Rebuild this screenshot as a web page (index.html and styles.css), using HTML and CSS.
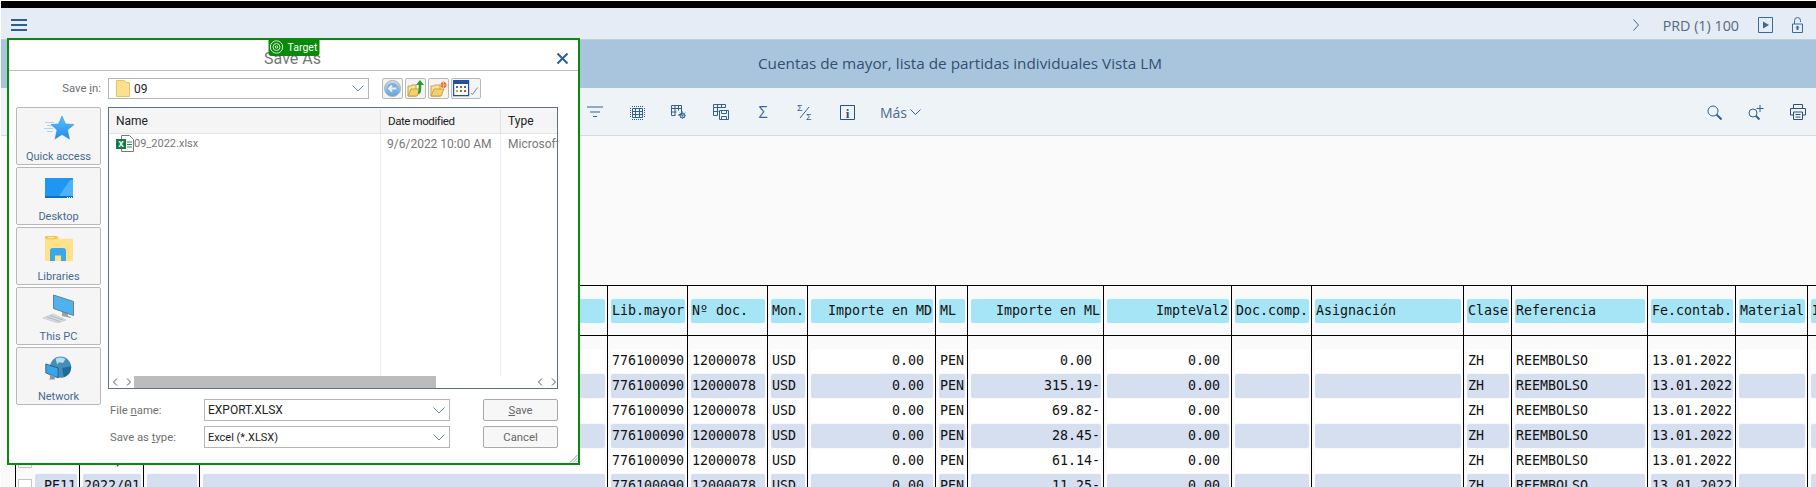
FILE: index.html
```html
<!DOCTYPE html>
<html lang="es">
<head>
<meta charset="utf-8">
<title>Cuentas de mayor, lista de partidas individuales Vista LM</title>
<link rel="stylesheet" href="styles.css">
</head>
<body>
<div class="topline"></div>
<header class="shell">
  <svg class="ico-menu" width="16" height="12" viewBox="0 0 16 12"><path d="M0 1h16M0 6h16M0 11h16"/></svg>
  <div class="shell-right">
    <svg class="ico-line" width="6" height="12" viewBox="0 0 6 12"><path d="M.5.5 5.500 6 .5 11.500"/></svg>
    <span class="sysname">PRD (1) 100</span>
    <svg class="ico-line" width="15" height="16" viewBox="0 0 15 16"><path d="M.5.5h14v15H.5z"/><path class="fill" d="M5 4.500 11 8 5 11.500z"/></svg>
    <svg class="ico-line" width="11" height="16" viewBox="0 0 11 16"><path d="M2.500 7V3.500a3 3 0 0 1 6 0V5"/><path d="M.5 7h10v8.500H.5z"/><path class="fill" d="M4.500 13v-2.500H3.500L5.500 8.500l2 2h-1V13z"/></svg>
  </div>
</header>
<div class="titlebar">Cuentas de mayor, lista de partidas individuales Vista LM</div>
<nav class="toolbar">
  <button class="tool"><svg class="ico-thin" width="16" height="12" viewBox="0 0 16 12"><path d="M0 1h16M3 6h10M6 10.500h4"/></svg></button>
  <button class="tool"><svg class="ico-thin" width="15" height="15" viewBox="0 0 15 15"><path d="M2.500 3.500h10v9h-10zM2.500 6.500h10M2.500 9.500h10M5.500 3.500v9M9.500 3.500v9"/><path stroke-dasharray="1 1" d="M2 1.500h11M2 14.500h11M.5 3v10M14.500 3v10"/></svg></button>
  <button class="tool"><svg class="ico-thin" width="16" height="15" viewBox="0 0 16 15"><path d="M.5.5h10v9h-3M.5.5v10h4M.5 3.500h10M.5 7h5M4 .5v9.500M7.500.5v5"/><circle cx="11.500" cy="10.500" r="2.500"/><path stroke-dasharray="1 1" d="M7.500 10.500h8M11.500 6.500v8M8.700 7.700l5.600 5.600M14.300 7.700l-5.600 5.600"/></svg></button>
  <button class="tool"><svg class="ico-thin" width="16" height="16" viewBox="0 0 16 16"><path d="M.5.5h12v3H.5zM.5 3.500v8h4M.5 7.500h5M4.500.5v11M8.500.5v3"/><path d="M6.500 6.500h9v9h-9zM8.500 6.500v3h5v-3M8.500 15.500v-3h5v3"/></svg></button>
  <button class="tool glyph">Σ</button>
  <button class="tool"><svg class="ico-ratio" width="16" height="17" viewBox="0 0 16 17"><text x="0" y="7" class="ratio-t">Σ</text><text x="9" y="16" class="ratio-t">Σ</text><path d="M3 14 12 3"/></svg></button>
  <button class="tool"><svg class="ico-thin" width="15" height="15" viewBox="0 0 15 15"><path class="dark" d="M.5.5h14v14H.5z"/><text x="7.500" y="12.500" class="info-t">i</text></svg></button>
  <button class="tool more">Más <svg class="ico-thin" width="11" height="6" viewBox="0 0 11 6"><path d="M.5.5 5.500 5.500 10.500.5"/></svg></button>
  <span class="spring"></span>
  <button class="tool"><svg class="ico-thin" width="15" height="15" viewBox="0 0 15 15"><circle cx="6" cy="6" r="5"/><path class="bold" d="m9.500 9.500 5 5"/></svg></button>
  <button class="tool"><svg class="ico-thin" width="16" height="15" viewBox="0 0 16 15"><circle cx="5" cy="8" r="4"/><path class="bold" d="m8 11 3.500 3.500"/><path d="M12 0v7M8.500 3.500h7"/></svg></button>
  <button class="tool tool-end"><svg class="ico-thin" width="16" height="16" viewBox="0 0 16 16"><path class="dark" d="M3.500 4V.5h9V4M3.500 11H.5V4.500h15V11h-3M3.500 8h9v7.500h-9zM5.500 10.500h5M5.500 13h5"/></svg></button>
</nav>

<main class="content">
  <div class="grid">
    <div class="row head">
      <div class="c"></div><div class="c"></div><div class="c"></div>
      <div class="c"><span class="v"></span></div>
      <div class="c"><span class="v">Lib.mayor</span></div>
      <div class="c"><span class="v">Nº doc.</span></div>
      <div class="c"><span class="v">Mon.</span></div>
      <div class="c"><span class="v r">Importe en MD</span></div>
      <div class="c"><span class="v">ML</span></div>
      <div class="c"><span class="v r">Importe en ML</span></div>
      <div class="c"><span class="v r">ImpteVal2</span></div>
      <div class="c"><span class="v">Doc.comp.</span></div>
      <div class="c"><span class="v">Asignación</span></div>
      <div class="c"><span class="v">Clase</span></div>
      <div class="c"><span class="v">Referencia</span></div>
      <div class="c"><span class="v">Fe.contab.</span></div>
      <div class="c"><span class="v">Material</span></div>
      <div class="c"><span class="v">I</span></div>
    </div>
    <div class="row gap">
      <div class="c"></div><div class="c"></div><div class="c"></div><div class="c"></div><div class="c"></div><div class="c"></div><div class="c"></div><div class="c"></div><div class="c"></div><div class="c"></div><div class="c"></div><div class="c"></div><div class="c"></div><div class="c"></div><div class="c"></div><div class="c"></div><div class="c"></div><div class="c"></div>
    </div>
    <div class="row">
      <div class="c first"><i class="check"></i><span class="v r"></span></div><div class="c"><span class="v"></span></div><div class="c"><span class="v"></span></div><div class="c"><span class="v"></span></div>
      <div class="c"><span class="v">776100090</span></div><div class="c"><span class="v">12000078</span></div><div class="c"><span class="v">USD</span></div><div class="c"><span class="v r">0.00 </span></div><div class="c"><span class="v">PEN</span></div><div class="c"><span class="v r">0.00 </span></div><div class="c"><span class="v r">0.00 </span></div><div class="c"><span class="v"></span></div><div class="c"><span class="v"></span></div><div class="c"><span class="v">ZH</span></div><div class="c"><span class="v">REEMBOLSO</span></div><div class="c"><span class="v">13.01.2022</span></div><div class="c"><span class="v"></span></div><div class="c"><span class="v"></span></div>
    </div>
    <div class="row alt">
      <div class="c first"><i class="check"></i><span class="v r"></span></div><div class="c"><span class="v"></span></div><div class="c"><span class="v"></span></div><div class="c"><span class="v"></span></div>
      <div class="c"><span class="v">776100090</span></div><div class="c"><span class="v">12000078</span></div><div class="c"><span class="v">USD</span></div><div class="c"><span class="v r">0.00 </span></div><div class="c"><span class="v">PEN</span></div><div class="c"><span class="v r">315.19-</span></div><div class="c"><span class="v r">0.00 </span></div><div class="c"><span class="v"></span></div><div class="c"><span class="v"></span></div><div class="c"><span class="v">ZH</span></div><div class="c"><span class="v">REEMBOLSO</span></div><div class="c"><span class="v">13.01.2022</span></div><div class="c"><span class="v"></span></div><div class="c"><span class="v"></span></div>
    </div>
    <div class="row">
      <div class="c first"><i class="check"></i><span class="v r"></span></div><div class="c"><span class="v"></span></div><div class="c"><span class="v"></span></div><div class="c"><span class="v"></span></div>
      <div class="c"><span class="v">776100090</span></div><div class="c"><span class="v">12000078</span></div><div class="c"><span class="v">USD</span></div><div class="c"><span class="v r">0.00 </span></div><div class="c"><span class="v">PEN</span></div><div class="c"><span class="v r">69.82-</span></div><div class="c"><span class="v r">0.00 </span></div><div class="c"><span class="v"></span></div><div class="c"><span class="v"></span></div><div class="c"><span class="v">ZH</span></div><div class="c"><span class="v">REEMBOLSO</span></div><div class="c"><span class="v">13.01.2022</span></div><div class="c"><span class="v"></span></div><div class="c"><span class="v"></span></div>
    </div>
    <div class="row alt">
      <div class="c first"><i class="check"></i><span class="v r"></span></div><div class="c"><span class="v"></span></div><div class="c"><span class="v"></span></div><div class="c"><span class="v"></span></div>
      <div class="c"><span class="v">776100090</span></div><div class="c"><span class="v">12000078</span></div><div class="c"><span class="v">USD</span></div><div class="c"><span class="v r">0.00 </span></div><div class="c"><span class="v">PEN</span></div><div class="c"><span class="v r">28.45-</span></div><div class="c"><span class="v r">0.00 </span></div><div class="c"><span class="v"></span></div><div class="c"><span class="v"></span></div><div class="c"><span class="v">ZH</span></div><div class="c"><span class="v">REEMBOLSO</span></div><div class="c"><span class="v">13.01.2022</span></div><div class="c"><span class="v"></span></div><div class="c"><span class="v"></span></div>
    </div>
    <div class="row">
      <div class="c first"><i class="check"></i><span class="v r"></span></div><div class="c"><span class="v">2022/01</span></div><div class="c"><span class="v"></span></div><div class="c"><span class="v"></span></div>
      <div class="c"><span class="v">776100090</span></div><div class="c"><span class="v">12000078</span></div><div class="c"><span class="v">USD</span></div><div class="c"><span class="v r">0.00 </span></div><div class="c"><span class="v">PEN</span></div><div class="c"><span class="v r">61.14-</span></div><div class="c"><span class="v r">0.00 </span></div><div class="c"><span class="v"></span></div><div class="c"><span class="v"></span></div><div class="c"><span class="v">ZH</span></div><div class="c"><span class="v">REEMBOLSO</span></div><div class="c"><span class="v">13.01.2022</span></div><div class="c"><span class="v"></span></div><div class="c"><span class="v"></span></div>
    </div>
    <div class="row alt">
      <div class="c first"><i class="check"></i><span class="v r">PE11</span></div><div class="c"><span class="v">2022/01</span></div><div class="c"><span class="v"></span></div><div class="c"><span class="v"></span></div>
      <div class="c"><span class="v">776100090</span></div><div class="c"><span class="v">12000078</span></div><div class="c"><span class="v">USD</span></div><div class="c"><span class="v r">0.00 </span></div><div class="c"><span class="v">PEN</span></div><div class="c"><span class="v r">11.25-</span></div><div class="c"><span class="v r">0.00 </span></div><div class="c"><span class="v"></span></div><div class="c"><span class="v"></span></div><div class="c"><span class="v">ZH</span></div><div class="c"><span class="v">REEMBOLSO</span></div><div class="c"><span class="v">13.01.2022</span></div><div class="c"><span class="v"></span></div><div class="c"><span class="v"></span></div>
    </div>
  </div>
</main>

<section class="dialog">
  <div class="badge"><svg width="14" height="14" viewBox="0 0 14 14"><circle cx="7" cy="7" r="6.200"/><circle cx="7" cy="7" r="3.500"/><circle cx="7" cy="7" r="1.200"/></svg>Target</div>
  <div class="dlg-title">
    <span></span>
    <span class="dlg-name">Save As</span>
    <svg class="dlg-close" width="11" height="11" viewBox="0 0 11 11"><path d="m.5.5 10 10M10.500.5l-10 10"/></svg>
  </div>
  <div class="dlg-body">
    <div class="savein">
      <label class="lbl savein-lbl">Save <u>i</u>n:</label>
      <div class="combo savein-combo">
        <svg width="14" height="17" viewBox="0 0 14 17"><path fill="#fde08e" stroke="#e3c268" d="M.5.5h8l1.500 2h3.500v14H.5z"/></svg>
        <span class="combo-text">09</span>
        <svg class="chev" width="12" height="7" viewBox="0 0 12 7"><path d="M.5.5 6 6l5.500-5.500"/></svg>
      </div>
      <div class="nav-btns">
        <button class="nav"><svg width="17" height="17" viewBox="0 0 17 17"><defs><linearGradient id="backg" x1="0" y1="0" x2="0" y2="1"><stop offset="0" stop-color="#d7dde2"/><stop offset="1" stop-color="#5f9fd3"/></linearGradient></defs><circle cx="8.500" cy="8.500" r="8" fill="url(#backg)" stroke="#a9b4bd"/><circle cx="8.500" cy="8.500" r="5.500" fill="#79aede"/><path fill="none" stroke="#e8f0f7" stroke-width="2" d="M12.500 8.500h-7M8 5.500l-3 3 3 3"/></svg></button>
        <button class="nav"><svg width="17" height="17" viewBox="0 0 17 17"><path fill="#fbe39b" stroke="#c9a23f" d="M1 16V6h3l1-1h4v11z"/><path fill="#f6cf6d" stroke="#c9a23f" d="M1 16l3-7h9l-3 7z"/><path fill="none" stroke="#2c9a2c" stroke-width="2.500" d="M11 13c2 0 2-2 2-9"/><path fill="#2c9a2c" d="M9 5l4-5 4 5z"/></svg></button>
        <button class="nav"><svg width="18" height="16" viewBox="0 0 18 16"><path fill="#fbe39b" stroke="#c9a23f" d="M1 15V5h3l1-1h5v11z"/><path fill="#f6cf6d" stroke="#c9a23f" d="M1 15l3-7h10l-3 7z"/><circle cx="13.500" cy="4" r="3" fill="#e66b1e"/><path stroke="#f7b27c" d="M13.500 0v8M9.500 4h8"/></svg></button>
        <button class="nav nav-wide"><svg width="26" height="17" viewBox="0 0 26 17"><path fill="#fff" stroke="#23509a" stroke-width="1.200" d="M.6.6h15v15H.6z"/><path fill="#23509a" d="M1 1h14v3H1z"/><path fill="#2b6cc4" d="M3 6h2v2H3z"/><path fill="#d04a3b" d="M7 6h2v2H7z"/><path fill="#2b6cc4" d="M11 6h2v2h-2z"/><path fill="#d9a21b" d="M3 10h2v2H3z"/><path fill="#3a9a3a" d="M7 10h2v2H7z"/><path fill="#d04a3b" d="M11 10h2v2h-2z"/><path fill="none" stroke="#6c8fb5" d="m18 13 1.500 1.500 5-7"/></svg></button>
      </div>
    </div>
    <div class="dlg-main">
      <aside class="places">
        <button class="place"><span class="place-ico"><svg width="30" height="24" viewBox="0 0 30 24"><defs><linearGradient id="starg" x1="0" y1="0" x2="0" y2="1"><stop offset="0" stop-color="#5cc0fb"/><stop offset="1" stop-color="#1c8fec"/></linearGradient></defs><path fill="#a8d6f6" d="M1 6h9v1H1zM3 9h7v1H3zM0 12h9v1H0zM3 15h6v1H3z"/><path fill="url(#starg)" stroke="#1a86dc" stroke-width=".5" d="m18 0 3.500 8 8.500.5-6.500 5.500 2 9-7.500-4.500-7 4.500 2-9L7 8.500l7.500-.5z"/></svg></span><span>Quick access</span></button>
        <button class="place"><span class="place-ico"><svg width="28" height="20" viewBox="0 0 28 20"><path fill="#1e96f2" d="M0 0h28v20H0z"/><path fill="#4db2f8" d="M14 18 25 2h3v16z"/><path fill="#0c6fc4" d="M0 18h28v2H0z"/><path fill="#fff" d="M22 19h1v1h-1zM24 19h1v1h-1zM26 19h1v1h-1z"/></svg></span><span>Desktop</span></button>
        <button class="place"><span class="place-ico"><svg width="28" height="25" viewBox="0 0 28 27" preserveAspectRatio="none"><path fill="#ffe28a" d="M0 3h28v24H0z"/><path fill="#f4c94a" d="M0 1a1 1 0 0 1 1-1h11l2 3H0z"/><path fill="#fff" stroke="#f0b93a" d="M2 1h8v2H2z"/><path fill="#3ba6e8" d="M5 27V16a3 3 0 0 1 3-3h10a3 3 0 0 1 3 3v11h-5v-6h-6v6z"/></svg></span><span>Libraries</span></button>
        <button class="place"><span class="place-ico"><svg width="32" height="29" viewBox="0 0 32 29"><path fill="#9aa4ad" d="M19 17h6v5l3 1v1l-9-2z"/><path fill="#4db3f0" stroke="#6b7f90" d="M10.500 1l20 6.500v14l-20-7z"/><path fill="#d9dde1" stroke="#b3b9bf" stroke-width=".5" d="M10 20l13 6-8 3-15-5z"/><path stroke="#9aa4ad" stroke-width=".7" d="M4 23l13 4.500M7 21.500l13 4.500"/></svg></span><span>This PC</span></button>
        <button class="place"><span class="place-ico"><svg width="27" height="24" viewBox="0 0 33 28"><circle cx="19" cy="13" r="13" fill="#3f8fb8"/><path fill="#b7dcec" d="M13 3c4-3 9-2 12 0l-3 5-5-1-2 3z"/><path fill="#1f6a97" d="M21 14l11-2c0 7-4 12-9 13z"/><path fill="#35a7ee" stroke="#3a4d5e" d="M1 9l15 5v12L1 20z"/><path fill="#8d979f" d="M6 22l6 2v4H4l2-1z"/></svg></span><span>Network</span></button>
      </aside>
      <div class="files">
        <div class="list">
          <div class="list-head">
            <span class="col col-name">Name</span>
            <span class="col col-date">Date modified</span>
            <span class="col col-type">Type</span>
          </div>
          <div class="list-body">
            <div class="col-lines"><i class="col-name"></i><i class="col-date"></i></div>
            <div class="file">
              <span class="col col-name file-name"><svg width="18" height="17" viewBox="0 0 18 17"><path fill="#fff" stroke="#777" d="M5.500.5h8l4 4v12h-12z"/><path stroke="#2d8a57" d="M11 7h5M11 9.500h5M11 12h5"/><path fill="#107c41" d="M0 4h10v10H0z"/><text x="5" y="12" class="xl-t">x</text></svg>09_2022.xlsx</span>
              <span class="col col-date">9/6/2022 10:00 AM</span>
              <span class="col col-type">Microsoft Excel Worksheet</span>
            </div>
          </div>
          <div class="hscroll">
            <svg class="arrows" width="18" height="8" viewBox="0 0 18 8"><path d="M4 .5.500 4 4 7.500M14 .5 17.500 4 14 7.500"/></svg>
            <div class="thumb"></div>
            <svg class="arrows" width="18" height="8" viewBox="0 0 18 8"><path d="M4 .5.500 4 4 7.500M14 .5 17.500 4 14 7.500"/></svg>
          </div>
        </div>
        <div class="form">
          <label class="lbl">File <u>n</u>ame:</label>
          <div class="combo"><span class="combo-text">EXPORT.XLSX</span><svg class="chev" width="12" height="7" viewBox="0 0 12 7"><path d="M.5.5 6 6l5.500-5.500"/></svg></div>
          <button class="act"><u>S</u>ave</button>
          <label class="lbl">Save as <u>t</u>ype:</label>
          <div class="combo combo-type"><span class="combo-text">Excel (*.XLSX)</span><svg class="chev" width="12" height="7" viewBox="0 0 12 7"><path d="M.5.5 6 6l5.500-5.500"/></svg></div>
          <button class="act">Cancel</button>
        </div>
      </div>
    </div>
  </div>
  <svg class="grip" width="9" height="9" viewBox="0 0 9 9"><path d="M8.500 1 1 8.500M8.500 4 4 8.500M8.500 7 7 8.500"/></svg>
</section>
</body>
</html>
```
FILE: styles.css
```css
* { box-sizing: border-box; }
html, body { margin: 0; height: 100%; }
body {
  width: 1816px;
  height: 487px;
  overflow: hidden;
  padding: 1px 0 0 1px;
  background: #fff;
  display: flex;
  flex-direction: column;
  position: relative;
  font-family: "Roboto", "Liberation Sans", sans-serif;
}
button { font: inherit; margin: 0; padding: 0; border: 0; background: none; }

.topline { height: 7px; background: #000; flex: none; }

.shell {
  flex: none;
  height: 32px;
  background: #e5ecf5;
  border-bottom: 1px solid #c3cdd8;
  display: flex;
  align-items: center;
  padding: 3px 13px 0 10px;
}
.ico-menu path { stroke: #2f5f8e; stroke-width: 2; fill: none; }
.shell-right { margin-left: auto; display: flex; align-items: center; gap: 19px; }
.shell-right > svg:first-child { margin-right: 5px; }
.ico-line path { fill: none; stroke: #3a6a98; stroke-width: 1; }
.ico-line path.fill { fill: #3a6a98; stroke: none; }
.sysname { font-size: 14.300px; color: #56697e; font-family: "Open Sans", sans-serif; }

.titlebar {
  flex: none;
  height: 48px;
  background: #a9c5de;
  color: #32506e;
  font-family: "Open Sans", sans-serif;
  font-size: 15.300px;
  display: flex;
  align-items: center;
  justify-content: center;
  padding: 0 0 3px 103px;
}

.toolbar {
  flex: none;
  height: 48px;
  background: #eef3f8;
  border-bottom: 1px solid #cfdce8;
  display: flex;
  align-items: center;
  padding-left: 573px;
  padding-top: 1px;
}
.tool {
  width: 42px;
  height: 24px;
  flex: none;
  display: flex;
  align-items: center;
  justify-content: center;
  color: #33618f;
}
.tool-end { margin-right: -3px; }
.spring { flex: 1; }
.glyph { font-size: 16px; font-family: "Open Sans", sans-serif; color: #3a6a98; }
.more {
  width: auto;
  margin-left: 12px;
  gap: 3px;
  font-family: "Open Sans", sans-serif;
  font-size: 14px;
  color: #4a6a8c;
}
.ico-thin path, .ico-thin circle { fill: none; stroke: #33618f; stroke-width: 1; }
.ico-thin path.bold { stroke-width: 2; }
.ico-thin path.dark { stroke: #2c4f7c; }
.ico-ratio path { stroke: #33618f; fill: none; }
.ratio-t { font: 9px "Liberation Sans", sans-serif; fill: #33618f; }
.info-t { font: bold 13px "Liberation Serif", serif; fill: #2c4f7c; text-anchor: middle; }

.content {
  flex: 1;
  min-height: 0;
  background: #fafafa;
  padding: 149px 0 0 14px;
  overflow: hidden;
}
.grid { width: 1900px; border-top: 1px solid #000; }
.row {
  display: grid;
  grid-template-columns: 64px 64px 56px 408px 80px 80px 40px 128px 32px 136px 128px 80px 152px 48px 136px 88px 72px 80px;
  height: 25px;
  font: 13.300px/24px "DejaVu Sans Mono", monospace;
  color: #111;
}
.row.head { height: 50px; border-bottom: 1px solid #000; }
.row.gap { height: 13px; }
.c {
  border-left: 1px solid #000;
  padding: 0 2px 1px 3px;
  min-width: 0;
  white-space: pre;
}
.head .c { padding-top: 13px; padding-bottom: 0; }
.v {
  display: block;
  height: 24px;
  padding: 0 1px;
  background: #fff;
  border-radius: 2px;
  overflow: hidden;
}
.head .v { background: #a5e5f5; }
.alt .v { background: #d5dff0; }
.v.r { text-align: right; }
.first { display: flex; padding-left: 2px; gap: 3px; }
.first .v { flex: 1; }
.check {
  flex: none;
  width: 14px;
  height: 14px;
  margin-top: 5px;
  background: #fff;
  border: 1px solid #c4c4c4;
}

.dialog {
  position: absolute;
  left: 7px;
  top: 38px;
  width: 573px;
  height: 427px;
  background: #fff;
  border: 2px solid #0a8a0a;
  display: flex;
  flex-direction: column;
  font-size: 11.500px;
  color: #6f6f6f;
}
.badge {
  position: absolute;
  left: 50%;
  top: -2px;
  transform: translateX(-50%);
  width: 51px;
  height: 18px;
  background: #0a8a0a;
  border-radius: 0 0 3px 3px;
  color: #fff;
  font-size: 10.500px;
  display: flex;
  align-items: center;
  justify-content: center;
  gap: 4px;
}
.badge svg { flex: none; }
.badge circle { fill: none; stroke: #d6ecd6; stroke-width: 1; }
.dlg-title {
  flex: none;
  height: 31px;
  border-bottom: 1px solid #bdbdbd;
  display: grid;
  grid-template-columns: 1fr auto 1fr;
  align-items: center;
  padding: 7px 10px 0 8px;
}
.dlg-name { font-size: 16px; color: #777; line-height: 1; }
.dlg-close { justify-self: end; }
.dlg-close path { stroke: #2f5f8a; stroke-width: 2; fill: none; }
.dlg-body { flex: 1; padding: 7px 20px 0 7px; display: flex; flex-direction: column; }
.savein { display: flex; align-items: center; height: 21px; flex: none; }
.lbl { font-size: 11.300px; color: #6f6f6f; white-space: nowrap; }
.savein-lbl { width: 85px; text-align: right; }
.combo {
  height: 22px;
  border: 1px solid #b5b5b5;
  background: #fff;
  display: flex;
  align-items: center;
  padding: 0 4px 0 3px;
  color: #222;
  font-size: 12px;
}
.combo-type { font-size: 11px; }
.savein-combo { width: 261px; margin-left: 7px; height: 21px; padding-left: 7px; gap: 4px; }
.combo-text { flex: 1; }
.chev path { fill: none; stroke: #5b87ad; stroke-width: 1; }
.nav-btns { display: flex; gap: 2px; margin-left: 13px; }
.nav {
  width: 21px;
  height: 21px;
  background: #f4f4f4;
  border: 1px solid #b9b9b9;
  border-radius: 2px;
  display: flex;
  align-items: center;
  justify-content: center;
}
.nav-wide { width: 30px; }
.dlg-main { display: flex; gap: 7px; margin-top: 8px; }
.places { width: 85px; flex: none; display: flex; flex-direction: column; gap: 2px; }
.place {
  height: 58px;
  background: #f5f5f5;
  border: 1px solid #b9b9b9;
  border-radius: 2px;
  display: flex;
  flex-direction: column;
  align-items: center;
  justify-content: flex-start;
  color: #466a90;
  font-size: 11px;
  line-height: 14px;
}
.place-ico { height: 42px; padding-bottom: 2px; display: flex; align-items: center; justify-content: center; flex: none; }
.files { width: 450px; flex: none; display: flex; flex-direction: column; }
.list {
  height: 282px;
  border: 1px solid #5c7285;
  display: flex;
  flex-direction: column;
  overflow: hidden;
}
.col { display: block; white-space: nowrap; overflow: hidden; font-size: 12px; }
.col-name { width: 272px; flex: none; }
.col-date { width: 120px; flex: none; }
.col-type { width: 56px; flex: none; }
.list-head {
  flex: none;
  height: 26px;
  background: #f5f5f5;
  border-bottom: 1px solid #e4e4e4;
  display: flex;
  align-items: center;
  color: #222;
  padding-top: 2px;
}
.list-head .col { padding-left: 7px; border-right: 1px solid #e0e0e0; line-height: 23px; }
.list-head .col-date { font-size: 11.500px; letter-spacing: -.4px; }
.list-head .col-type { border-right: 0; }
.list-body { flex: 1; position: relative; }
.col-lines { position: absolute; inset: 0; display: flex; }
.col-lines i { display: block; border-right: 1px solid #e8eff8; }
.file { position: relative; display: flex; height: 19px; align-items: center; color: #777; }
.file-name { display: flex; align-items: center; padding-left: 7px; font-size: 11px; }
.file .col-date { padding-left: 6px; }
.file .col-type { padding-left: 7px; }
.xl-t { font: bold 10px "Liberation Sans", sans-serif; fill: #fff; text-anchor: middle; }
.hscroll { flex: none; height: 12px; display: flex; align-items: center; }
.arrows { flex: none; margin: 0 3px 0 4px; }
.arrows path { fill: none; stroke: #555; stroke-width: 1; }
.thumb { height: 12px; width: 302px; background: #bcbcbc; }
.hscroll .arrows:last-child { margin-left: auto; margin-right: 1px; }
.form {
  display: grid;
  grid-template-columns: 96px 246px 33px 75px;
  grid-template-rows: 22px 22px;
  row-gap: 5px;
  margin-top: 10px;
  align-items: center;
}
.form .lbl { grid-column: 1; padding-left: 2px; }
.form .combo { grid-column: 2; }
.form .act { grid-column: 4; }
.act {
  height: 22px;
  background: #f7f7f7;
  border: 1px solid #a9a9a9;
  border-radius: 2px;
  color: #666;
  font-size: 11.300px;
}
.grip { position: absolute; right: 0; bottom: 0; }
.grip path { fill: none; stroke: #8a9ba8; stroke-width: 1; }
```
